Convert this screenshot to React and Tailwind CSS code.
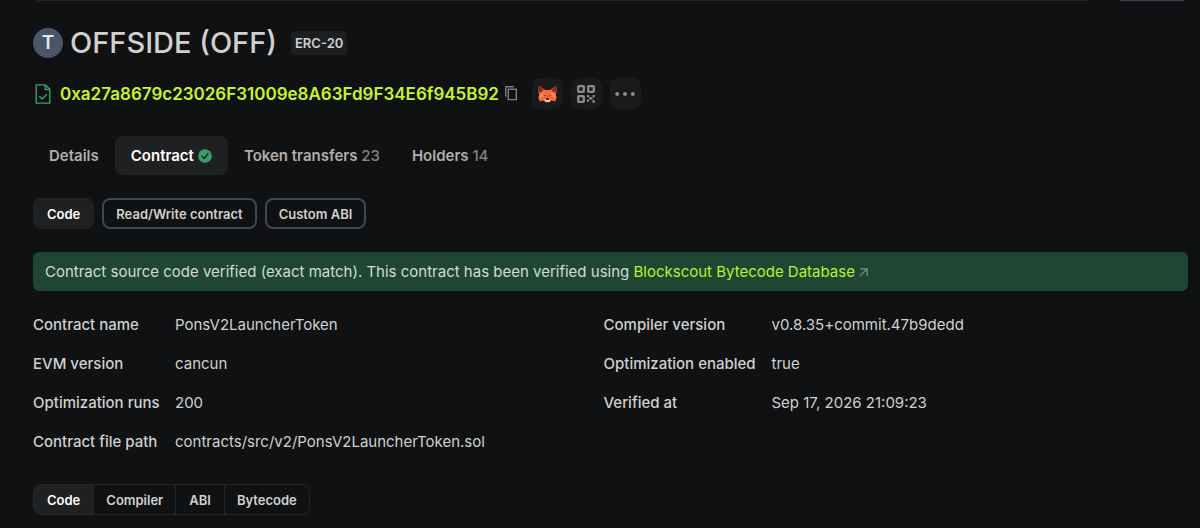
import React from "react";

const fieldRows = [
  ["Contract name", "PonsV2LauncherToken", "Compiler version", "v0.8.35+commit.47b9dedd"],
  ["EVM version", "cancun", "Optimization enabled", "true"],
  ["Optimization runs", "200", "Verified at", "Sep 17, 2026 21:09:23"],
  ["Contract file path", "contracts/src/v2/PonsV2LauncherToken.sol"],
];

function VerifiedFileIcon() {
  return (
    <svg width="16" height="20" viewBox="0 0 16 20" fill="none" stroke="#38a169" strokeWidth="1.4" strokeLinejoin="round" aria-hidden="true">
      <path d="M1.2 .9h9.2l4.4 4.4v13.8H1.2z" />
      <path d="M10.2 1v4.5h4.4" />
      <path d="M4.6 12.6l2.5 2.5 4.3-4.4" strokeLinecap="round" />
    </svg>
  );
}

function CopyIcon() {
  return (
    <svg width="12" height="15" viewBox="0 0 12 15" fill="none" stroke="#7d7d7d" strokeWidth="1.4" aria-hidden="true">
      <path d="M.8 10.8V.8h8" />
      <path d="M3.3 3.2h8v10.4h-8z" />
    </svg>
  );
}

function FoxIcon() {
  return (
    <svg width="19" height="18" viewBox="0 0 20 18" aria-hidden="true">
      <path fill="#f4683a" d="M1 .6 7.4 4.8h5.2L19 .6l.6 5.6-1 4 .9 3-1.4 3.6-3.6-.9-2.3 1.7H7.8l-2.3-1.7-3.6.9L.5 13.2l.9-3-1-4z" />
      <path fill="#8a2c1c" d="M1 .6 5.8 4.4 4 7 1.4 7.4.6 5zM19 .6 14.2 4.4 16 7l2.6.4.8-2.4z" />
      <path fill="#ff8a4c" d="M1.4 10.2 5.6 7.4l2.5 3.8-2.6.6-5 1.4zM18.6 10.2 14.4 7.4l-2.5 3.8 2.6.6 5 1.4z" />
      <path fill="#241a1a" d="M5.3 9.8l2.5.5.3 1.3zM14.7 9.8l-2.5.5-.3 1.3zM8.2 14.2l.4-.6h2.8l.4.6-.2.9H8.4z" />
      <path fill="#e9e3e1" d="M6.8 14.8l1.3-.3.5.9h2.8l.5-.9 1.3.3-1.5 2.4H8.3z" />
    </svg>
  );
}

function QrIcon() {
  return (
    <svg width="18" height="18" viewBox="0 0 18 18" aria-hidden="true">
      <g fill="none" stroke="#8c8c8c" strokeWidth="2.3">
        <rect x="1.2" y="1.2" width="5.6" height="5.6" rx=".6" />
        <rect x="11.2" y="1.2" width="5.6" height="5.6" rx=".6" />
        <rect x="1.2" y="11.2" width="5.6" height="5.6" rx=".6" />
      </g>
      <path fill="#8c8c8c" d="M10 10h2.2v2.2H10zM15.6 10h2.2v2.2h-2.2zM12.2 12.2h3.4v2.2h-3.4zM10 14.6h2.2v2.2H10zM15.4 15.2h2.4v2.6h-2.4z" />
    </svg>
  );
}

function DotsIcon() {
  return (
    <svg width="20" height="4" viewBox="0 0 20 4" fill="#8c8c8c" aria-hidden="true">
      <circle cx="2.2" cy="2" r="2" />
      <circle cx="10" cy="2" r="2" />
      <circle cx="17.8" cy="2" r="2" />
    </svg>
  );
}

function CheckBadge() {
  return (
    <svg width="14" height="14" viewBox="0 0 14 14" aria-hidden="true">
      <circle cx="7" cy="7" r="6.8" fill="#38a169" />
      <path d="M4 7.3l2.1 2.2L10 4.7" fill="none" stroke="#16251d" strokeWidth="1.5" strokeLinecap="round" strokeLinejoin="round" />
    </svg>
  );
}

function ExternalArrow() {
  return (
    <svg className="ml-1 inline-block" width="9" height="9" viewBox="0 0 9 9" fill="none" stroke="#83908a" strokeWidth="1.2" aria-hidden="true">
      <path d="M1.2 .9h7v7M8 1 .8 8.2" />
    </svg>
  );
}

function IconButton({ label, children }) {
  return (
    <button type="button" aria-label={label} className="flex size-[31px] items-center justify-center rounded-lg bg-[#191a1b]">
      {children}
    </button>
  );
}

export default function App() {
  return (
    <div className="min-h-screen bg-[#101112] pr-3 pb-3 pl-[33px] font-['Inter',sans-serif] text-[15px] leading-6 text-[#d0d0d0]">
      <div className="flex gap-8 pr-1 pl-1">
        <div className="h-px grow bg-[#222425]" />
        <div className="h-px w-16 bg-[#3b4450]" />
      </div>

      <header className="flex items-center pt-[22px]">
        <span className="flex size-[30px] items-center justify-center rounded-full bg-[#4a5568] text-[19px] font-semibold text-[#e2e8f0]">T</span>
        <h1 className="ml-[7px] text-[29px] leading-10 font-medium">OFFSIDE (OFF)</h1>
        <span className="ml-[14px] rounded bg-[#1d1e1f] px-1 text-[13px] leading-6 font-semibold">ERC-20</span>
      </header>

      <div className="mt-[15px] flex items-center">
        <span className="flex w-[27px] pl-0.5">
          <VerifiedFileIcon />
        </span>
        <a href="#address" className="text-[17px] font-semibold text-[#c8f52a]">0xa27a8679c23026F31009e8A63Fd9F34E6f945B92</a>
        <button type="button" aria-label="Copy address" className="ml-1.5">
          <CopyIcon />
        </button>
        <div className="ml-[15px] flex gap-2">
          <IconButton label="Add token to wallet"><FoxIcon /></IconButton>
          <IconButton label="Show QR code"><QrIcon /></IconButton>
          <IconButton label="More actions"><DotsIcon /></IconButton>
        </div>
      </div>

      <nav className="mt-[27px] flex font-semibold text-[#b0aeab]">
        <button type="button" className="h-[39px] px-4">Details</button>
        <button type="button" className="flex h-[39px] items-center gap-1 rounded-lg bg-[#1f2021] px-4 text-white">
          Contract <CheckBadge />
        </button>
        <button type="button" className="h-[39px] px-4">
          Token transfers <span className="font-medium text-[#858381]">23</span>
        </button>
        <button type="button" className="h-[39px] px-4">
          Holders <span className="font-medium text-[#858381]">14</span>
        </button>
      </nav>

      <div className="mt-[23px] flex gap-2 text-[13px] font-semibold">
        <button type="button" className="h-[31px] rounded-lg bg-[#1f2021] px-[14px] text-white">Code</button>
        <button type="button" className="h-[31px] rounded-lg border-2 border-[#3e4755] px-3">Read/Write contract</button>
        <button type="button" className="h-[31px] rounded-lg border-2 border-[#3e4755] px-3">Custom ABI</button>
      </div>

      <div role="status" className="mt-[23px] rounded-md bg-[#1f4632] px-3 py-2 leading-[23px] text-[#d2dbd5]">
        Contract source code verified (exact match). This contract has been verified using{" "}
        <a href="#database" className="text-[#b9f227]">
          Blockscout Bytecode Database
          <ExternalArrow />
        </a>
      </div>

      <dl className="mt-[22px] grid grid-cols-[130px_1fr_156px_1fr] gap-x-3 gap-y-[15px]">
        {fieldRows.map(([leftName, leftValue, rightName, rightValue]) => (
          <React.Fragment key={leftName}>
            <dt className="font-medium whitespace-nowrap">{leftName}</dt>
            <dd className="min-w-0 break-words">{leftValue}</dd>
            {rightName && <dt className="font-medium whitespace-nowrap">{rightName}</dt>}
            {rightName && <dd className="min-w-0 break-words">{rightValue}</dd>}
          </React.Fragment>
        ))}
      </dl>

      <div className="mt-[30px] inline-flex h-[31px] divide-x divide-[#252627] overflow-hidden rounded-lg border border-[#252627] text-[13px] font-semibold">
        <button type="button" className="bg-[#1f2021] px-[13px] text-white">Code</button>
        <button type="button" className="px-3">Compiler</button>
        <button type="button" className="px-[13px]">ABI</button>
        <button type="button" className="px-3">Bytecode</button>
      </div>
    </div>
  );
}
